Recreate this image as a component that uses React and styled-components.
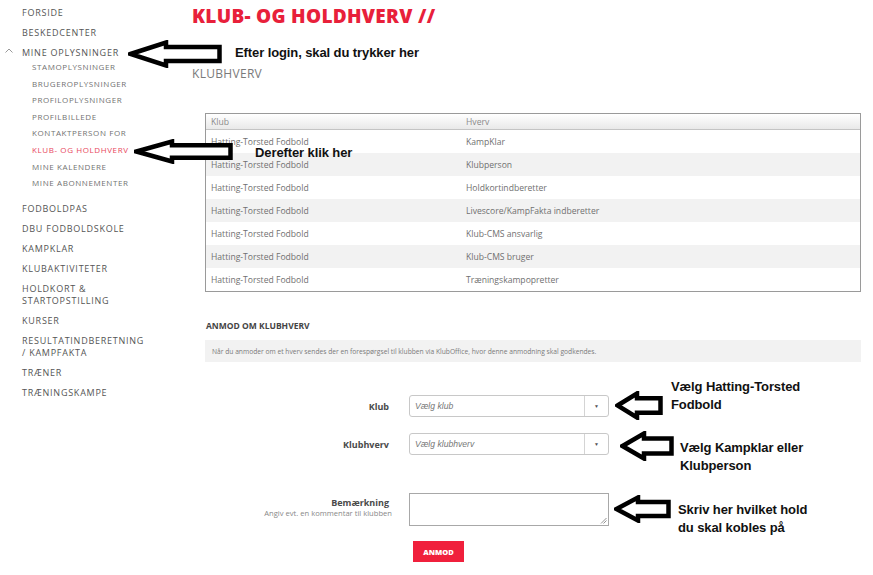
import React from 'react';
import styled, { createGlobalStyle } from 'styled-components';

const GlobalStyle = createGlobalStyle`
  html, body {
    margin: 0;
    padding: 0;
    background: #ffffff;
  }
  body {
    font-family: 'Open Sans', 'Liberation Sans', sans-serif;
  }
`;

const Page = styled.div`
  position: relative;
  width: 873px;
  height: 575px;
  display: flex;
  overflow: hidden;
  background: #fff;
`;

const Sidebar = styled.nav`
  width: 170px;
  flex: 0 0 170px;
  padding: 3px 0 0 22px;
`;

const NavItem = styled.div`
  position: relative;
  font-family: 'Open Sans', sans-serif;
  font-size: 9px;
  line-height: 12px;
  padding: 4px 0;
  color: #555;
  text-transform: uppercase;
  letter-spacing: 0.75px;
  white-space: nowrap;
`;

const Caret = styled.svg`
  position: absolute;
  left: -17px;
  top: 5px;
`;

const SubList = styled.div`
  margin: -4px 0 7px 10px;
`;

const SubItem = styled.div`
  font-family: 'Open Sans', sans-serif;
  font-size: 8px;
  line-height: 16.6px;
  color: ${p => (p.active ? '#e8475c' : '#727272')};
  text-transform: uppercase;
  letter-spacing: 0.6px;
  white-space: nowrap;
`;

const Main = styled.main`
  flex: 1;
  padding: 0 12px 0 0;
`;

const Title = styled.h1`
  margin: 0;
  font-family: 'Open Sans', sans-serif;
  font-weight: 800;
  font-size: 19px;
  line-height: 32px;
  color: #e8203a;
  letter-spacing: 0.3px;
`;

const SubTitle = styled.h2`
  margin: 34px 0 0;
  font-family: 'Open Sans', sans-serif;
  font-weight: 400;
  font-size: 12px;
  line-height: 16px;
  color: #7a7a7a;
  letter-spacing: 0.3px;
`;

const Content = styled.div`
  padding-left: 13px;
`;

const TableBox = styled.div`
  margin-top: 31px;
  border: 1px solid #9a9a9a;
`;

const Row = styled.div`
  display: grid;
  grid-template-columns: 255px 1fr;
  height: ${p => (p.head ? '15px' : '23px')};
  align-items: center;
  background: ${p =>
    p.head ? 'linear-gradient(#ffffff, #e9e9e9)' : p.odd ? '#f2f2f2' : '#ffffff'};
  border-bottom: ${p => (p.head ? '1px solid #c4c4c4' : 'none')};
`;

const Cell = styled.div`
  padding-left: 5px;
  font-family: 'Open Sans', sans-serif;
  font-size: 8.6px;
  color: ${p => (p.head ? '#8a8a8a' : '#707070')};
  white-space: nowrap;
`;

const SectionHead = styled.h3`
  margin: 28px 0 0 1px;
  font-family: 'Open Sans', sans-serif;
  font-weight: 700;
  font-size: 8.5px;
  line-height: 12px;
  color: #444;
`;

const InfoBox = styled.div`
  margin-top: 8px;
  height: 22px;
  display: flex;
  align-items: center;
  padding-left: 7px;
  background: #f2f2f2;
  font-family: 'Open Sans', sans-serif;
  font-size: 6.7px;
  color: #7a7a7a;
`;

const Form = styled.div`
  margin-top: 33px;
  display: grid;
  grid-template-columns: 184px 200px;
  column-gap: 20px;
  align-items: center;
`;

const Label = styled.div`
  text-align: right;
  font-family: 'Open Sans', sans-serif;
  font-weight: 700;
  font-size: 9px;
  color: #4a4a4a;
  line-height: 11px;
  margin-bottom: ${p => p.mb || 0}px;
  align-self: ${p => (p.top ? 'start' : 'center')};
  margin-top: ${p => (p.top ? 4 : 0)}px;
`;

const Hint = styled.div`
  font-weight: 400;
  font-size: 7.6px;
  color: #888;
  line-height: 10px;
  margin-right: -3px;
`;

const Select = styled.div`
  height: 22px;
  box-sizing: border-box;
  border: 1px solid #c8c8c8;
  border-radius: 3px;
  display: flex;
  align-items: center;
  margin-bottom: ${p => p.mb || 0}px;
`;

const Placeholder = styled.span`
  flex: 1;
  padding-left: 5px;
  font-family: 'Liberation Sans', Arial, sans-serif;
  font-style: italic;
  font-size: 8.6px;
  color: #777;
`;

const Toggle = styled.span`
  width: 23px;
  height: 100%;
  border-left: 1px solid #d4d4d4;
  display: flex;
  align-items: center;
  justify-content: center;
  font-size: 5px;
  color: #555;
`;

const TextArea = styled.div`
  position: relative;
  height: 33px;
  box-sizing: border-box;
  border: 1px solid #a8a8a8;
`;

const Grip = styled.svg`
  position: absolute;
  right: 1px;
  bottom: 1px;
`;

const Spacer = styled.div``;

const Button = styled.button`
  justify-self: start;
  margin: 15px 0 0 4px;
  width: 51px;
  height: 21px;
  border: none;
  background: #f0203c;
  color: #fff;
  font-family: 'Open Sans', sans-serif;
  font-weight: 800;
  font-size: 7.5px;
  padding: 0;
`;

/* annotation overlay: arrows and notes drawn on top of the screenshot */
const Note = styled.div`
  position: absolute;
  left: ${p => p.x}px;
  top: ${p => p.y}px;
  font-family: 'Liberation Sans', Arial, sans-serif;
  font-weight: 700;
  font-size: 13px;
  line-height: 18px;
  color: #111;
  letter-spacing: -0.1px;
  white-space: nowrap;
`;

const ArrowWrap = styled.svg`
  position: absolute;
  left: ${p => p.x}px;
  top: ${p => p.y}px;
`;

const Arrow = ({ x, y, w, h, head }) => {
  const s = 2.5;
  const a = h * 0.25;
  const b = h * 0.75;
  const pts = [
    [s, h / 2],
    [head, s],
    [head, a],
    [w - s, a],
    [w - s, b],
    [head, b],
    [head, h - s],
  ]
    .map(p => p.join(','))
    .join(' ');
  return (
    <ArrowWrap x={x} y={y} width={w} height={h} viewBox={`0 0 ${w} ${h}`}>
      <polygon points={pts} fill="#fff" stroke="#000" strokeWidth="4.5" strokeLinejoin="miter" />
    </ArrowWrap>
  );
};

const rows = [
  'KampKlar',
  'Klubperson',
  'Holdkortindberetter',
  'Livescore/KampFakta indberetter',
  'Klub-CMS ansvarlig',
  'Klub-CMS bruger',
  'Træningskampopretter',
];

const App = () => {
  return (
    <>
      <GlobalStyle />
      <Page>
        <Sidebar>
          <NavItem>Forside</NavItem>
          <NavItem>Beskedcenter</NavItem>
          <NavItem>
            <Caret width="8" height="5" viewBox="0 0 8 5">
              <polyline points="0.5,4.5 4,1 7.5,4.5" fill="none" stroke="#999" strokeWidth="1" />
            </Caret>
            Mine oplysninger
          </NavItem>
          <SubList>
            <SubItem>Stamoplysninger</SubItem>
            <SubItem>Brugeroplysninger</SubItem>
            <SubItem>Profiloplysninger</SubItem>
            <SubItem>Profilbillede</SubItem>
            <SubItem>Kontaktperson for</SubItem>
            <SubItem active>Klub- og holdhverv</SubItem>
            <SubItem>Mine kalendere</SubItem>
            <SubItem>Mine abonnementer</SubItem>
          </SubList>
          <NavItem>Fodboldpas</NavItem>
          <NavItem>DBU Fodboldskole</NavItem>
          <NavItem>Kampklar</NavItem>
          <NavItem>Klubaktiviteter</NavItem>
          <NavItem>
            Holdkort &amp;
            <br />
            startopstilling
          </NavItem>
          <NavItem>Kurser</NavItem>
          <NavItem>
            Resultatindberetning
            <br />/ Kampfakta
          </NavItem>
          <NavItem>Træner</NavItem>
          <NavItem>Træningskampe</NavItem>
        </Sidebar>

        <Main>
          <Title>KLUB- OG HOLDHVERV //</Title>
          <SubTitle>KLUBHVERV</SubTitle>
          <Content>
            <TableBox>
              <Row head>
                <Cell head>Klub</Cell>
                <Cell head>Hverv</Cell>
              </Row>
              {rows.map((r, i) => (
                <Row key={r} odd={i % 2 === 1}>
                  <Cell>Hatting-Torsted Fodbold</Cell>
                  <Cell>{r}</Cell>
                </Row>
              ))}
            </TableBox>

            <SectionHead>ANMOD OM KLUBHVERV</SectionHead>
            <InfoBox>
              Når du anmoder om et hverv sendes der en forespørgsel til klubben via KlubOffice, hvor denne anmodning skal godkendes.
            </InfoBox>

            <Form>
              <Label mb={16}>Klub</Label>
              <Select mb={16}>
                <Placeholder>Vælg klub</Placeholder>
                <Toggle>▼</Toggle>
              </Select>
              <Label mb={38}>Klubhverv</Label>
              <Select mb={38}>
                <Placeholder>Vælg klubhverv</Placeholder>
                <Toggle>▼</Toggle>
              </Select>
              <Label top>
                Bemærkning
                <Hint>Angiv evt. en kommentar til klubben</Hint>
              </Label>
              <TextArea>
                <Grip width="7" height="7" viewBox="0 0 7 7">
                  <line x1="1" y1="6.5" x2="6.5" y2="1" stroke="#777" strokeWidth="0.8" />
                  <line x1="3.5" y1="6.5" x2="6.5" y2="3.5" stroke="#777" strokeWidth="0.8" />
                </Grip>
              </TextArea>
              <Spacer />
              <Button>ANMOD</Button>
            </Form>
          </Content>
        </Main>

        <Arrow x={128} y={40} w={94} h={28} head={38} />
        <Note x={235} y={44}>Efter login, skal du trykker her</Note>

        <Arrow x={134} y={139} w={99} h={25} head={38} />
        <Note x={255} y={144}>Derefter klik her</Note>

        <Arrow x={615} y={391} w={48} h={29} head={22} />
        <Note x={671} y={378}>
          Vælg Hatting-Torsted
          <br />
          Fodbold
        </Note>

        <Arrow x={620} y={431} w={54} h={30} head={24} />
        <Note x={680} y={439}>
          Vælg Kampklar eller
          <br />
          Klubperson
        </Note>

        <Arrow x={614} y={495} w={57} h={28} head={24} />
        <Note x={678} y={501}>
          Skriv her hvilket hold
          <br />
          du skal kobles på
        </Note>
      </Page>
    </>
  );
};

export default App;
